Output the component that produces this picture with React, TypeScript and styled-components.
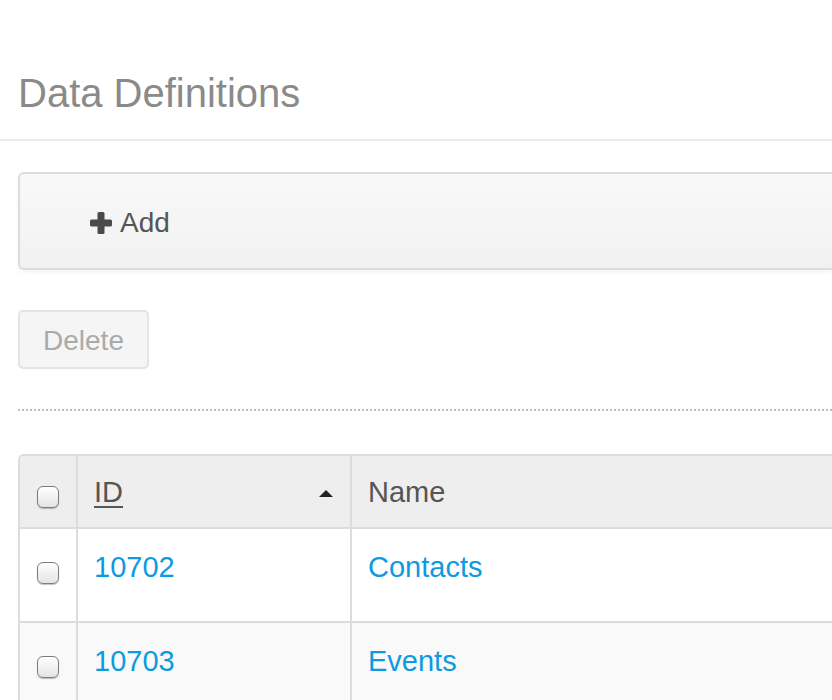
import React, { FC } from "react";
import styled, { createGlobalStyle } from "styled-components";

const GlobalStyle = createGlobalStyle`
  body {
    margin: 0;
    background: #fff;
    font-family: "Liberation Sans", Arial, sans-serif;
    overflow: hidden;
  }
`;

const Page = styled.div`
  width: 100%;
`;

const Header = styled.header`
  padding: 71px 0 24px 18px;
  border-bottom: 2px solid #ebebeb;
`;

const Title = styled.h1`
  margin: 0;
  font-size: 40px;
  line-height: 44px;
  font-weight: normal;
  color: #8a8a8a;
`;

const Content = styled.div`
  padding: 31px 0 0 18px;
`;

const Toolbar = styled.div`
  display: flex;
  align-items: center;
  height: 98px;
  box-sizing: border-box;
  padding: 3px 0 0 70px;
  border: 2px solid #dcdcdc;
  border-right: none;
  border-radius: 6px 0 0 6px;
  background: linear-gradient(#f9f9f9, #f1f1f1);
  box-shadow: 0 3px 5px rgba(0, 0, 0, 0.04);
`;

const AddButton = styled.button`
  display: flex;
  align-items: center;
  gap: 8px;
  padding: 0;
  border: none;
  background: none;
  font-family: inherit;
  font-size: 28px;
  color: #555;
  cursor: pointer;
`;

const Actions = styled.div`
  padding: 40px 0 40px;
  border-bottom: 2px dotted #bdbdbd;
`;

const DeleteButton = styled.button`
  height: 59px;
  width: 131px;
  box-sizing: border-box;
  border: 2px solid #e4e4e4;
  border-radius: 5px;
  background: #f5f5f5;
  font-family: inherit;
  font-size: 28px;
  color: #aaa;
  padding: 2px 0 0;
`;

const Table = styled.div`
  margin-top: 43px;
  border-top: 2px solid #dcdcdc;
  border-left: 2px solid #dcdcdc;
  border-top-left-radius: 6px;
  overflow: hidden;
`;

const Row = styled.div<{ $head?: boolean; $striped?: boolean }>`
  display: grid;
  grid-template-columns: 58px 274px 1fr;
  height: ${(p) => (p.$head ? 73 : 94)}px;
  box-sizing: border-box;
  border-bottom: 2px solid #dcdcdc;
  background: ${(p) => (p.$head ? "#eee" : p.$striped ? "#f9f9f9" : "#fff")};
`;

const Cell = styled.div<{ $head?: boolean }>`
  display: flex;
  align-items: flex-start;
  padding: ${(p) => (p.$head ? 16 : 18)}px 16px 0;
  font-size: 29px;
  line-height: 40px;
  color: #555;
  border-right: 2px solid #dcdcdc;
  &:last-child {
    border-right: none;
  }
`;

const CheckCell = styled(Cell)`
  padding-left: 17px;
`;

const Check = styled.span<{ $head?: boolean }>`
  display: block;
  width: 22px;
  height: 22px;
  box-sizing: border-box;
  margin-top: ${(p) => (p.$head ? 14 : 15)}px;
  border: 1.5px solid #7d7d7d;
  border-radius: 6px;
  background: linear-gradient(#ffffff, #e4e4e4);
  box-shadow: 0 1px 1px rgba(0, 0, 0, 0.25);
`;

const SortLabel = styled.span`
  text-decoration: underline;
  text-underline-offset: 4px;
  text-decoration-thickness: 2px;
`;

const SortArrow = styled.span`
  margin: 18px 1px 0 auto;
  width: 0;
  height: 0;
  border-left: 7px solid transparent;
  border-right: 7px solid transparent;
  border-bottom: 7px solid #222;
`;

const Link = styled.a`
  color: #0c9be1;
  text-decoration: none;
`;

const rows = [
  { id: "10702", name: "Contacts" },
  { id: "10703", name: "Events" },
];

const PlusIcon: FC = () => (
  <svg width="22" height="22" viewBox="0 0 22 22">
    <rect x="7.5" y="0" width="7" height="22" rx="1.5" fill="#4a4a4a" />
    <rect x="0" y="7.5" width="22" height="7" rx="1.5" fill="#4a4a4a" />
  </svg>
);

const App: FC = () => (
  <Page>
    <GlobalStyle />
    <Header>
      <Title>Data Definitions</Title>
    </Header>
    <Content>
      <Toolbar>
        <AddButton>
          <PlusIcon />
          Add
        </AddButton>
      </Toolbar>
      <Actions>
        <DeleteButton disabled>Delete</DeleteButton>
      </Actions>
      <Table>
        <Row $head>
          <CheckCell $head>
            <Check $head />
          </CheckCell>
          <Cell $head>
            <SortLabel>ID</SortLabel>
            <SortArrow />
          </Cell>
          <Cell $head>Name</Cell>
        </Row>
        {rows.map((r, i) => (
          <Row key={r.id} $striped={i % 2 === 1}>
            <CheckCell>
              <Check />
            </CheckCell>
            <Cell>
              <Link href="#">{r.id}</Link>
            </Cell>
            <Cell>
              <Link href="#">{r.name}</Link>
            </Cell>
          </Row>
        ))}
      </Table>
    </Content>
  </Page>
);

export default App;
